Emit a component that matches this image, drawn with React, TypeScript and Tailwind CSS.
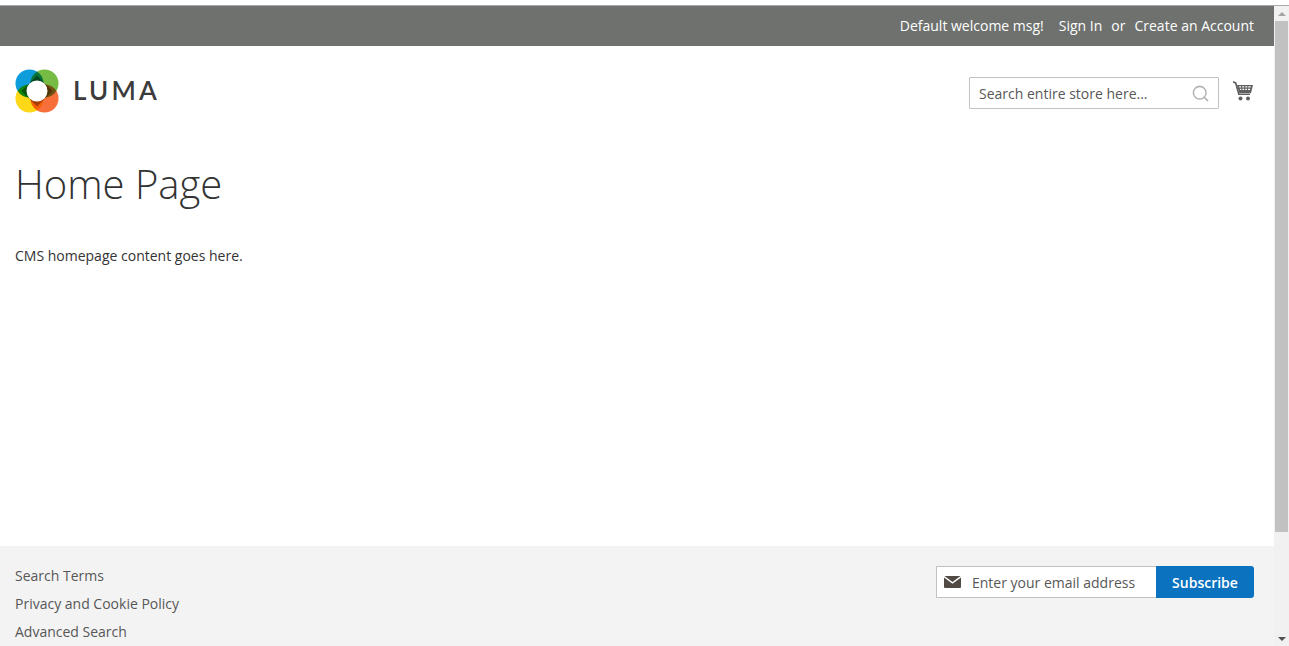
import { Search } from "lucide-react";

const FOOTER_LINKS = ["Search Terms", "Privacy and Cookie Policy", "Advanced Search"] as const;

function LumaMark() {
  return (
    <svg width="44" height="44" viewBox="0 0 44 44" className="shrink-0">
      <g style={{ isolation: "isolate" }}>
        <circle cx="14.5" cy="14.5" r="14" fill="#0d9ddb" />
        <circle cx="29.5" cy="14.5" r="14" fill="#76bb43" style={{ mixBlendMode: "multiply" }} />
        <circle cx="14.5" cy="29.5" r="14" fill="#fdd816" style={{ mixBlendMode: "multiply" }} />
        <circle cx="29.5" cy="29.5" r="14" fill="#f7703a" style={{ mixBlendMode: "multiply" }} />
        <path d="M22 6.5 L37.5 22 L22 37.5 L6.5 22 Z" fill="#b0a080" style={{ mixBlendMode: "multiply" }} />
      </g>
      <circle cx="22" cy="22" r="10.5" fill="#fff" />
    </svg>
  );
}

function CartIcon() {
  return (
    <svg width="22" height="22" viewBox="0 0 22 22" fill="#5f5f5f">
      <path d="M1 1 L4.4 2.2 L7.4 13.4 H18.3 L18 15 H6.2 L3 3.4 L1 2.8 Z" />
      <path d="M5 5 H21 L19 13 H7.2 Z M7 6.2 L7.4 7.6 H9.2 L9 6.2 Z M10.2 6.2 L10.3 7.6 H12.2 V6.2 Z M13.3 6.2 V7.6 H15.2 L15.4 6.2 Z M16.4 6.2 L16.2 7.6 H18.5 L18.9 6.2 Z M7.8 8.7 L8.2 10 H9.6 L9.4 8.7 Z M10.4 8.7 L10.6 10 H12.2 V8.7 Z M13.3 8.7 V10 H14.9 L15.1 8.7 Z M16.1 8.7 L15.9 10 H17.9 L18.2 8.7 Z" fillRule="evenodd" />
      <circle cx="8.5" cy="18.5" r="2" />
      <circle cx="16" cy="18.5" r="2" />
    </svg>
  );
}

function MailIcon() {
  return (
    <svg width="17" height="12" viewBox="0 0 17 12" fill="#514943">
      <path d="M0.5 0 H16.5 L8.5 6 Z" />
      <path d="M0 1.5 L8.5 7.8 L17 1.5 V11 a1 1 0 0 1 -1 1 H1 a1 1 0 0 1 -1 -1 Z" />
    </svg>
  );
}

function Scrollbar() {
  return (
    <div className="flex w-[15px] shrink-0 flex-col bg-[#f1f1f1]">
      <div className="flex h-[15px] items-center justify-center">
        <div className="h-0 w-0 border-x-[4px] border-b-[4px] border-x-transparent border-b-[#a3a3a3]" />
      </div>
      <div className="mx-px h-[511px] bg-[#c1c1c1]" />
      <div className="flex-1" />
      <div className="flex h-[15px] items-center justify-center">
        <div className="h-0 w-0 border-x-[4px] border-t-[4px] border-x-transparent border-t-[#505050]" />
      </div>
    </div>
  );
}

export default function App() {
  return (
    <div className="flex h-[646px] w-[1289px] flex-col overflow-hidden bg-white font-['Open_Sans',sans-serif] text-[14px] text-[#333]">
      <div className="h-[5px] shrink-0 bg-white" />
      <div className="h-px shrink-0 bg-[#a8aaa8]" />
      <div className="flex min-h-0 flex-1">
        <div className="flex min-w-0 flex-1 flex-col">
          {/* Top bar */}
          <div className="flex h-[40px] shrink-0 items-center justify-end gap-[15px] bg-[#6e716e] pr-[20px] pb-[2px] text-white">
            <span>Default welcome msg!</span>
            <span className="flex gap-[9px]">
              <span>Sign In</span>
              <span>or</span>
              <span>Create an Account</span>
            </span>
          </div>

          {/* Header */}
          <div className="flex h-[86px] shrink-0 justify-between pl-[15px] pr-[20px]">
            <div className="flex items-start gap-[14px] pt-[23px]">
              <LumaMark />
              <span className="mt-[5px] font-['Lato',sans-serif] text-[26px] leading-[32px] font-semibold tracking-[3.2px] text-[#3b3b3b]">
                LUMA
              </span>
            </div>
            <div className="flex items-start gap-[13px] pt-[31px]">
              <div className="flex h-[32px] w-[250px] items-center justify-between rounded-[1px] border border-[#c2c2c2] pr-[8px] pl-[9px] text-[#575757]">
                <span>Search entire store here...</span>
                <Search size={19} strokeWidth={1.9} className="text-[#b3b3b3]" />
              </div>
              <div className="pt-[3px]">
                <CartIcon />
              </div>
            </div>
          </div>

          {/* Page content */}
          <div className="min-h-0 flex-1 px-[15px]">
            <h1 className="mt-[24px] text-[40px] leading-[56px] font-light text-[#333]">Home Page</h1>
            <p className="mt-[34px] leading-[20px]">CMS homepage content goes here.</p>
          </div>

          {/* Footer */}
          <div className="flex h-[100px] shrink-0 justify-between bg-[#f3f3f3] pt-[20px] pr-[20px] pl-[15px]">
            <ul className="flex flex-col gap-[8px] text-[#575757]">
              {FOOTER_LINKS.map((link) => (
                <li key={link} className="leading-[20px]">
                  {link}
                </li>
              ))}
            </ul>
            <div className="flex h-[32px] w-[318px]">
              <div className="flex flex-1 items-center gap-[11px] rounded-l-[1px] border border-r-0 border-[#c2c2c2] bg-white pl-[7px] text-[#575757]">
                <MailIcon />
                <span className="mt-px">Enter your email address</span>
              </div>
              <div className="flex w-[98px] items-center justify-center rounded-r-[3px] bg-[#0b72bf] font-semibold text-white">
                Subscribe
              </div>
            </div>
          </div>
        </div>
        <Scrollbar />
      </div>
    </div>
  );
}
